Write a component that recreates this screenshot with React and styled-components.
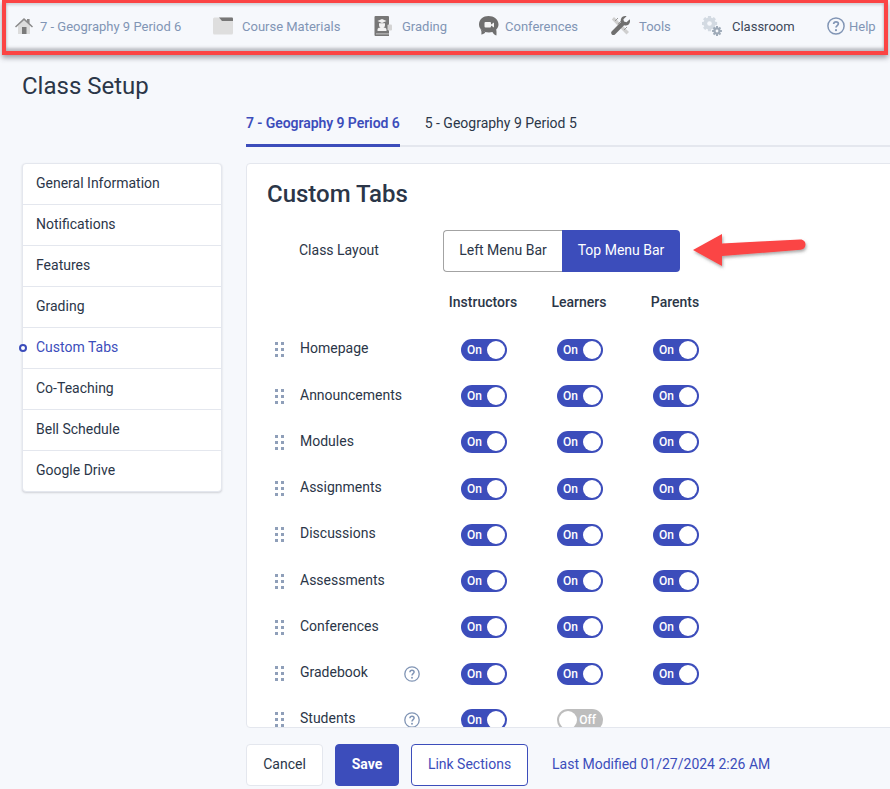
import React from 'react'
import styled, { createGlobalStyle } from 'styled-components'

const GlobalStyle = createGlobalStyle`
  html, body { margin: 0; padding: 0; background: #f6f8fc; }
  body { font-family: Roboto, "Liberation Sans", sans-serif; color: #2b3648; }
  * { box-sizing: border-box; }
`

const Page = styled.div`
  width: 890px;
  height: 789px;
  overflow: hidden;
  display: flex;
  flex-direction: column;
`

const TopBar = styled.nav`
  height: 55px;
  margin: 0 2px 0 2px;
  border: 4px solid #fb4444;
  border-top-width: 3px;
  box-shadow: 0 3px 5px rgba(60, 60, 70, .45), inset 0 2px 3px rgba(60, 60, 70, .2), inset 0 -3px 3px rgba(60, 60, 70, .3);
  position: relative;
  background: #f6f8fc;
`

const NavItem = styled.a`
  position: absolute;
  left: ${p => p.$left}px;
  top: 13px;
  height: 20px;
  display: flex;
  align-items: center;
  gap: ${p => p.$gap}px;
  font-size: 13px;
  white-space: nowrap;
  color: ${p => (p.$dark ? '#3d4859' : '#8195b5')};
`

const Heading = styled.h1`
  margin: 17px 0 0 22px;
  font-size: 24px;
  line-height: 28px;
  font-weight: 400;
  color: #2b3648;
`

const TabBar = styled.div`
  margin: 11px 0 0 246px;
  display: flex;
  gap: 25px;
  height: 36px;
  border-bottom: 2px solid #e4e7ee;
`

const Tab = styled.div`
  height: 36px;
  line-height: 25px;
  font-size: 14px;
  font-weight: ${p => (p.$active ? 600 : 400)};
  letter-spacing: ${p => (p.$active ? '-.005em' : '0')};
  color: ${p => (p.$active ? '#3c4dbb' : '#2b3648')};
  border-bottom: ${p => (p.$active ? '3px solid #3c4dbb' : 'none')};
`

const Body = styled.div`
  margin-top: 16px;
  padding-left: 22px;
  display: flex;
  gap: 24px;
  align-items: flex-start;
`

const SideMenu = styled.ul`
  list-style: none;
  margin: 0;
  padding: 0;
  width: 200px;
  flex: none;
  background: #fff;
  border: 1px solid #e4e7ee;
  border-radius: 4px;
  box-shadow: 0 1px 2px rgba(60, 60, 70, .2);
`

const SideItem = styled.li`
  position: relative;
  height: ${p => (p.$last ? 40 : 41)}px;
  padding: 0 0 ${p => (p.$last ? 2 : 3)}px 13px;
  display: flex;
  align-items: center;
  font-size: 14px;
  color: ${p => (p.$active ? '#3c4dbb' : '#2b3648')};
  border-bottom: ${p => (p.$last ? 'none' : '1px solid #e4e7ee')};
  ${p =>
    p.$active &&
    `&::before {
      content: '';
      box-sizing: border-box;
      position: absolute;
      left: -4px;
      top: 16px;
      width: 8px;
      height: 8px;
      border: 2px solid #3c4dbb;
      border-radius: 50%;
      background: #fff;
    }`}
`

const Card = styled.section`
  width: 660px;
  flex: none;
  height: 565px;
  overflow: hidden;
  background: #fff;
  border: 1px solid #e4e7ee;
  border-radius: 4px;
`

const CardTitle = styled.h2`
  margin: 16px 0 0 20px;
  font-size: 24px;
  line-height: 28px;
  font-weight: 500;
  color: #2b3648;
`

const LayoutRow = styled.div`
  position: relative;
  margin-top: 22px;
  padding-left: 52px;
  display: flex;
  align-items: center;
  height: 42px;
`

const LayoutLabel = styled.div`
  width: 144px;
  font-size: 14px;
  color: #2b3648;
  padding-bottom: 2px;
`

const Segmented = styled.div`
  display: flex;
  height: 42px;
`

const SegButton = styled.div`
  display: flex;
  align-items: center;
  justify-content: center;
  width: ${p => p.$width}px;
  font-size: 14px;
  padding-bottom: 2px;
  color: ${p => (p.$active ? '#fff' : '#2b3648')};
  background: ${p => (p.$active ? '#3c4dbb' : '#fff')};
  border: ${p => (p.$active ? '0' : '1px solid #a3a3a3')};
  border-right: 0;
  border-radius: ${p => (p.$active ? '0 4px 4px 0' : '4px 0 0 4px')};
`

const Arrow = styled.svg`
  position: absolute;
  left: 444px;
  top: 2px;
`

const HeaderRow = styled.div`
  margin-top: 21px;
  height: 18px;
  display: grid;
  grid-template-columns: 188px repeat(3, 96px);
  font-size: 14px;
  font-weight: 500;
  line-height: 18px;
  color: #2b3648;
`

const HeaderCell = styled.div`
  text-align: center;
`

const Rows = styled.div`
  margin-top: 15.75px;
`

const Row = styled.div`
  height: 46.25px;
  display: grid;
  grid-template-columns: 28px 25px 104px 32px repeat(3, 96px);
  align-items: center;
  font-size: 14px;
  color: #2b3648;
`

const Handle = styled.div`
  grid-column: 2;
  display: grid;
  grid-template-columns: 3px 3px;
  grid-auto-rows: 3px;
  gap: 3px;
  width: 9px;
`

const Dot = styled.span`
  background: #8f9fb9;
`

const RowLabel = styled.div`
  padding-bottom: 3px;
`

const HelpSlot = styled.div`
  display: flex;
  align-items: center;
  margin-top: 1px;
`

const ToggleCell = styled.div`
  display: flex;
  justify-content: center;
`

const ToggleTrack = styled.div`
  width: 46px;
  height: 22px;
  border-radius: 11px;
  padding: 2px;
  display: flex;
  align-items: center;
  flex-direction: ${p => (p.$on ? 'row' : 'row-reverse')};
  justify-content: space-between;
  background: ${p => (p.$on ? '#3c4dbb' : '#bdbdbd')};
`

const ToggleText = styled.span`
  font-size: 12px;
  font-weight: 500;
  color: #fff;
  padding: ${p => (p.$on ? '0 0 0 4px' : '0 5px 0 0')};
`

const Knob = styled.span`
  width: 18px;
  height: 18px;
  border-radius: 50%;
  background: #fff;
`

const Footer = styled.div`
  margin: 16px 0 0 246px;
  display: flex;
  align-items: center;
  gap: 12px;
`

const Button = styled.button`
  height: 42px;
  width: ${p => p.$width}px;
  padding: 0 0 2px;
  font-family: inherit;
  font-size: 14px;
  font-weight: ${p => (p.$variant === 'primary' ? 700 : 400)};
  border-radius: 4px;
  color: ${p => (p.$variant === 'primary' ? '#fff' : p.$variant === 'outline' ? '#3c4dbb' : '#2b3648')};
  background: ${p => (p.$variant === 'primary' ? '#3c4dbb' : '#fff')};
  border: 1px solid ${p => (p.$variant === 'primary' ? '#3c4dbb' : p.$variant === 'outline' ? '#3c4dbb' : '#e4e7ee')};
`

const Modified = styled.div`
  margin-left: 12px;
  font-size: 14px;
  color: #3c4dbb;
  padding-bottom: 2px;
`

const HomeIcon = () => (
  <svg width="20" height="20" viewBox="0 0 20 20">
    <path d="M4 9.5 10 4l6 5.500V18H4z" fill="#dcdcdc" />
    <path d="M1 10.500 10 2l3 2.800V3h2.600v4.200L19 10.500l-1 1-8-7.300-8 7.300z" fill="#8a8a8a" />
    <rect x="8" y="11" width="4.500" height="7" fill="#7a7a7a" />
  </svg>
)

const FolderIcon = () => (
  <svg width="20" height="20" viewBox="0 0 20 20">
    <rect x="0" y="1.500" width="20" height="17" rx="1.500" fill="#dedede" />
    <path d="M6 1.500h13a1 1 0 0 1 1 1V5H9z" fill="#777" />
  </svg>
)

const GradingIcon = () => (
  <svg width="18" height="20" viewBox="0 0 18 20">
    <path d="M1.500 0H14a1 1 0 0 1 1 1v19H1.500A1 1 0 0 1 .5 19V1a1 1 0 0 1 1-1z" fill="#777" />
    <path d="M2 17.500h13v.8H2z" fill="#ddd" />
    <path d="M3.500 5 8 3l4.500 2L8 7z" fill="#f2f2f2" />
    <path d="M5 7.200h6V9a3 3 0 0 1-6 0zM3.500 15v-1.500c0-1.400 2-2.300 4.500-2.300s4.500.9 4.500 2.300V15z" fill="#f2f2f2" />
    <rect x="13.500" y="8.500" width="4.500" height="6" rx="1" fill="#d4d4d4" />
  </svg>
)

const ConferenceIcon = () => (
  <svg width="20" height="20" viewBox="0 0 20 20">
    <path d="M9.500 0C14.700 0 19.500 3.400 19.500 8.500c0 2-.9 3.700-2.300 5 .4 1.800.4 4.500.2 6-1.800-.4-3-1.900-4-3.500-1 .3-2.200.5-3.400.5C4.300 16.500 0 13 0 8.500 0 3.400 4.300 0 9.500 0z" fill="#6f6f6f" />
    <path d="M1.500 13c1 1.500 1.200 3.500.8 5.500 1.800-.2 3-1 4-2.300z" fill="#6f6f6f" />
    <rect x="5.500" y="6" width="6.500" height="5.500" rx="1" fill="#f4f4f4" />
    <path d="M12 8.500 15 6.500v5l-3-2z" fill="#f4f4f4" />
  </svg>
)

const ToolsIcon = () => (
  <svg width="19" height="20" viewBox="0 0 19 20">
    <path d="M3 1 18 16l-2.500 2.500L.8 3.500z" fill="#cfcfcf" />
    <path d="M4 5 7 2M7 8l3-3M10 11l3-3M13 14l3-3" stroke="#9b9b9b" strokeWidth="1" />
    <path d="M18.800 3.200 15.500 6.300 13 5.600l-.6-2.400L15.600.2c-2.500-.7-5 .6-5.700 3-.3 1-.2 2 .1 2.800L.8 15.200c-.9.900-.9 2.300 0 3.200.9.900 2.300.9 3.200 0L13.100 9.200c2.700.9 5.200-.5 5.800-3 .2-1 .1-2.100-.1-3z" fill="#6f6f6f" />
  </svg>
)

const gearPath = (cx, cy, r, t) => {
  const pts = []
  for (let i = 0; i < 8; i++) {
    const a = (i * Math.PI) / 4
    const w = 0.28
    const p = (rad, ang) => `${(cx + rad * Math.cos(ang)).toFixed(2)} ${(cy + rad * Math.sin(ang)).toFixed(2)}`
    pts.push(`${i ? 'L' : 'M'}${p(r, a - w)}L${p(t, a - w * 0.7)}L${p(t, a + w * 0.7)}L${p(r, a + w)}`)
  }
  return pts.join('') + 'Z'
}

const GearsIcon = () => (
  <svg width="20" height="20" viewBox="0 0 20 20">
    <path d={gearPath(7.500, 7.500, 6, 7.800)} fill="#d3dae2" />
    <circle cx="7.500" cy="7.500" r="2.300" fill="#f6f8fc" />
    <path d={gearPath(15, 15, 3.600, 5)} fill="#9eaab8" />
    <circle cx="15" cy="15" r="1.400" fill="#f6f8fc" />
  </svg>
)

const QuestionIcon = ({ size = 16, color = '#8195b5' }) => (
  <svg width={size} height={size} viewBox="0 0 16 16" fill="none">
    <circle cx="8" cy="8" r="7.200" stroke={color} strokeWidth="1.300" />
    <path d="M5.900 6.200c.1-1.200 1-1.900 2.100-1.900 1.200 0 2.100.8 2.100 1.800 0 1.500-2.100 1.600-2.100 3.300" stroke={color} strokeWidth="1.500" />
    <circle cx="8" cy="11.700" r=".95" fill={color} />
  </svg>
)

const RedArrow = () => (
  <Arrow width="124" height="42" viewBox="0 0 124 42">
    <defs>
      <filter id="arrowShadow" x="-10%" y="-20%" width="120%" height="150%">
        <feDropShadow dx="1" dy="2" stdDeviation="1.500" floodColor="#555" floodOpacity=".5" />
      </filter>
    </defs>
    <path
      d="M2 18 31 2v9.500L109 7.500c3.500-.2 5.500 2.200 5.500 5 0 3-2 5-5 5.300L31 24v10z"
      fill="#fb4444"
      filter="url(#arrowShadow)"
    />
  </Arrow>
)

const navItems = [
  { left: 8, gap: 6, label: '7 - Geography 9 Period 6', icon: <HomeIcon /> },
  { left: 207, gap: 9, label: 'Course Materials', icon: <FolderIcon /> },
  { left: 368, gap: 10, label: 'Grading', icon: <GradingIcon /> },
  { left: 473, gap: 6, label: 'Conferences', icon: <ConferenceIcon /> },
  { left: 605, gap: 9, label: 'Tools', icon: <ToolsIcon /> },
  { left: 696, gap: 10, label: 'Classroom', icon: <GearsIcon />, dark: true },
  { left: 821, gap: 4, label: 'Help', icon: <QuestionIcon size={18} /> },
]

const sideItems = [
  'General Information',
  'Notifications',
  'Features',
  'Grading',
  'Custom Tabs',
  'Co-Teaching',
  'Bell Schedule',
  'Google Drive',
]

const tabRows = [
  { name: 'Homepage', roles: [true, true, true] },
  { name: 'Announcements', roles: [true, true, true] },
  { name: 'Modules', roles: [true, true, true] },
  { name: 'Assignments', roles: [true, true, true] },
  { name: 'Discussions', roles: [true, true, true] },
  { name: 'Assessments', roles: [true, true, true] },
  { name: 'Conferences', roles: [true, true, true] },
  { name: 'Gradebook', help: true, roles: [true, true, true] },
  { name: 'Students', help: true, roles: [true, false] },
]

const Toggle = ({ on }) => (
  <ToggleTrack $on={on}>
    <ToggleText $on={on}>{on ? 'On' : 'Off'}</ToggleText>
    <Knob />
  </ToggleTrack>
)

export default function App() {
  return (
    <Page>
      <GlobalStyle />
      <TopBar>
        {navItems.map(item => (
          <NavItem key={item.label} $left={item.left} $gap={item.gap} $dark={item.dark}>
            {item.icon}
            {item.label}
          </NavItem>
        ))}
      </TopBar>
      <Heading>Class Setup</Heading>
      <TabBar>
        <Tab $active>7 - Geography 9 Period 6</Tab>
        <Tab>5 - Geography 9 Period 5</Tab>
      </TabBar>
      <Body>
        <SideMenu>
          {sideItems.map((name, i) => (
            <SideItem key={name} $active={name === 'Custom Tabs'} $last={i === sideItems.length - 1}>
              {name}
            </SideItem>
          ))}
        </SideMenu>
        <Card>
          <CardTitle>Custom Tabs</CardTitle>
          <LayoutRow>
            <LayoutLabel>Class Layout</LayoutLabel>
            <Segmented>
              <SegButton $width={119}>Left Menu Bar</SegButton>
              <SegButton $width={118} $active>Top Menu Bar</SegButton>
            </Segmented>
            <RedArrow />
          </LayoutRow>
          <HeaderRow>
            <span />
            <HeaderCell>Instructors</HeaderCell>
            <HeaderCell>Learners</HeaderCell>
            <HeaderCell>Parents</HeaderCell>
          </HeaderRow>
          <Rows>
            {tabRows.map(row => (
              <Row key={row.name}>
                <Handle>
                  {[0, 1, 2, 3, 4, 5].map(n => <Dot key={n} />)}
                </Handle>
                <RowLabel>{row.name}</RowLabel>
                <HelpSlot>{row.help && <QuestionIcon />}</HelpSlot>
                {row.roles.map((on, i) => (
                  <ToggleCell key={i}>
                    <Toggle on={on} />
                  </ToggleCell>
                ))}
              </Row>
            ))}
          </Rows>
        </Card>
      </Body>
      <Footer>
        <Button $width={77}>Cancel</Button>
        <Button $width={64} $variant="primary">Save</Button>
        <Button $width={117} $variant="outline">Link Sections</Button>
        <Modified>Last Modified 01/27/2024 2:26 AM</Modified>
      </Footer>
    </Page>
  )
}
